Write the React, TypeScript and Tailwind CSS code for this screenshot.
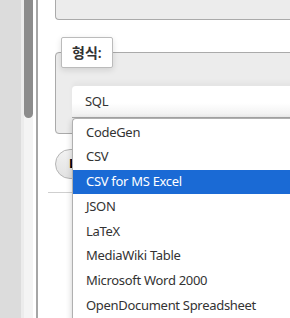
const formats = [
  "CodeGen",
  "CSV",
  "CSV for MS Excel",
  "JSON",
  "LaTeX",
  "MediaWiki Table",
  "Microsoft Word 2000",
  "OpenDocument Spreadsheet",
]

export default function App() {
  return (
    <div
      className="relative flex w-[290px] h-[318px] overflow-hidden bg-white text-[#333]"
      style={{ fontFamily: '"Noto Sans", "Noto Sans CJK KR", sans-serif' }}
    >
      {/* left scroll strip */}
      <div className="w-[21px] shrink-0 bg-[#dcdcdc]" />
      <div className="w-[3px] shrink-0 bg-[#ececec]" />
      <div className="w-[9px] shrink-0 bg-[#f4f4f4]">
        <div className="h-[118px] rounded-b-full bg-[#8c8c8c]" />
      </div>
      <div className="w-[3px] shrink-0 bg-white" />
      <div className="w-[2px] shrink-0 bg-[#a6a6a6]" />

      {/* main */}
      <div className="flex-1 min-w-0 flex flex-col">
        <div className="ml-[17px] h-[20px] w-[260px] shrink-0 bg-[#ececec] border-l border-b border-[#aaaaaa] rounded-bl-[4px]" />

        <fieldset className="ml-[17px] mt-[17px] w-[260px] shrink-0 border border-[#aaaaaa] rounded-[4px] bg-[#ececec] p-0 pb-[15px]">
          <legend className="ml-[5px] h-[31px] px-[10px] flex items-center bg-white border border-[#bbbbbb] rounded-[2px] shadow-[0_2px_6px_rgba(0,0,0,0.12)] text-[14px] font-semibold text-[#333]">
            형식:
          </legend>
          <div className="ml-[16px] mt-[18px] h-[32px] w-[250px] flex items-center pl-[13px] rounded-tl-[4px] border-b border-[#a8a8a8] bg-gradient-to-b from-white from-55% to-[#efefef] shadow-[0_-4px_4px_rgba(0,0,0,0.03)] text-[13px] tracking-[-0.3px]">
            SQL
          </div>
        </fieldset>

        <div className="ml-[17px] mt-[15px] h-[30px] w-[40px] shrink-0 rounded-full border border-[#b5b5b5] bg-gradient-to-b from-[#f2f2f2] to-[#e2e2e2] flex items-center pl-[13px] text-[13px] font-bold text-black">
          L
        </div>

        <div className="ml-[10px] mt-[13px] h-px w-[30px] bg-[#cfcfcf]" />
      </div>

      {/* open dropdown list */}
      <div className="absolute left-[72px] top-[118px] w-[230px] h-[210px] bg-white border-l border-t border-[#b0b0b0] rounded-tl-[4px] shadow-[0_2px_6px_rgba(0,0,0,0.2)] pt-[1px]">
        {formats.map((f) => (
          <div
            key={f}
            className={
              f === "CSV for MS Excel"
                ? "h-[24.75px] flex items-center pl-[13px] text-[13px] tracking-[-0.3px] bg-[#1a6ad5] text-white"
                : "h-[24.75px] flex items-center pl-[13px] text-[13px] tracking-[-0.3px] text-[#333]"
            }
          >
            {f}
          </div>
        ))}
      </div>
    </div>
  )
}
